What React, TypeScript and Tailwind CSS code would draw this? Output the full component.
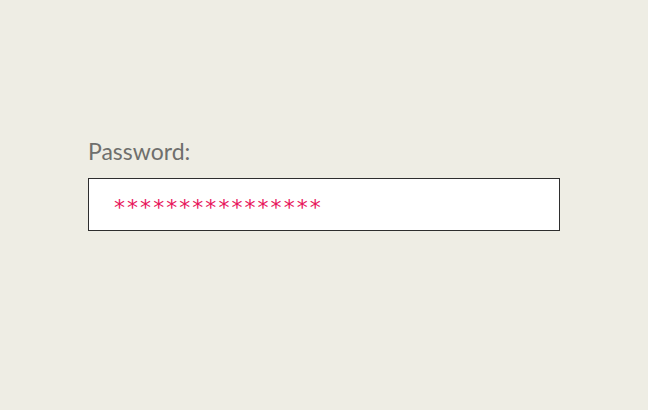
import React from 'react';

const App: React.FC = () => {
  // Mot de passe masqué
  const masked = '*'.repeat(16);

  return (
    <div className="w-[648px] h-[410px] bg-[#eeede4] pt-[136px] pl-[88px]" style={{ fontFamily: 'Lato, "Open Sans", sans-serif' }}>
      <label className="block text-[23px] leading-[30px] text-[#6f6f6c] font-normal">Password:</label>
      <div className="mt-[12px] w-[472px] h-[53px] bg-white border border-[#2e2e2e] flex items-center pl-[25px]">
        <span className="text-[22px] text-[#e8175d] tracking-[2.05px] pt-[6px]" style={{ fontFamily: '"DejaVu Sans", sans-serif' }}>{masked}</span>
      </div>
    </div>
  );
};

export default App;
